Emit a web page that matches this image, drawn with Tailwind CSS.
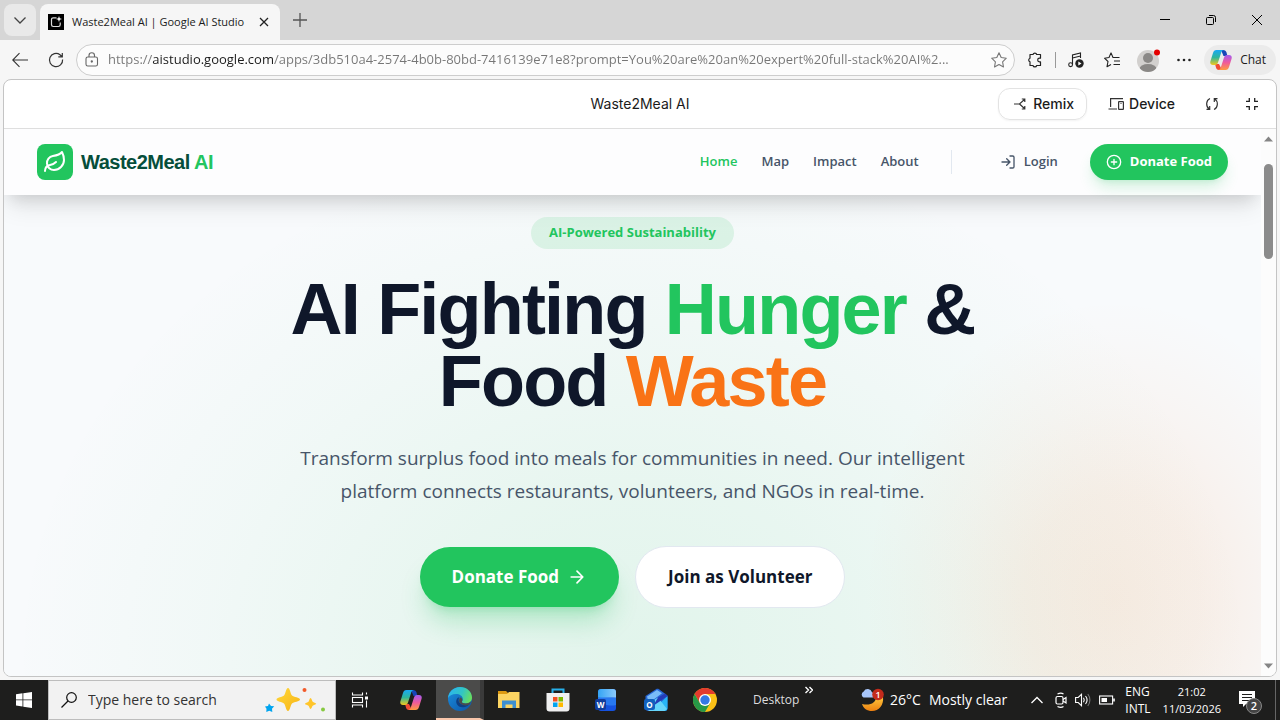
<!doctype html>
<html lang="en">

<head>
  <meta charset="UTF-8" />
  <meta name="viewport" content="width=device-width, initial-scale=1.0" />
  <title>Waste2Meal AI | Google AI Studio</title>
  <script src="https://cdn.jsdelivr.net/npm/@tailwindcss/browser@4"></script>
</head>

<body class="flex h-screen flex-col overflow-hidden bg-[#f6f6f6] font-['Open_Sans',sans-serif] text-[#1b1b1b]">

  <!-- Tab strip -->
  <header class="flex h-10 shrink-0 items-end bg-[#d6d6d6]">
    <button aria-label="Search tabs" class="mb-1 ml-1 flex size-8 items-center justify-center rounded-lg bg-[#e9e9e9]">
      <svg class="size-4" viewBox="0 0 16 16" fill="none" stroke="#444" stroke-width="1.3"><path d="M2.500 5.500 8 11l5.500-5.500" /></svg>
    </button>
    <div class="ml-1 flex h-9 w-60 items-center rounded-t-lg bg-[#f6f6f6] px-2">
      <svg class="size-4 shrink-0" viewBox="0 0 16 16" fill="none">
        <rect width="16" height="16" fill="#000" />
        <path d="M8.500 3.800H5.200A1.700 1.700 0 0 0 3.500 5.500v5.300a1.700 1.700 0 0 0 1.700 1.700h5.300a1.700 1.700 0 0 0 1.700-1.700V8.500" stroke="#ddd" stroke-width="1.200" />
        <path d="m11 2 .8 2.200L14 5l-2.200.8L11 8l-.8-2.200L8 5l2.200-.8z" fill="#fff" />
      </svg>
      <span class="ml-2 flex-1 text-[11px] whitespace-nowrap">Waste2Meal AI | Google AI Studio</span>
      <button aria-label="Close tab" class="flex size-4 items-center justify-center">
        <svg class="size-3" viewBox="0 0 12 12" stroke="#222" stroke-width="1.300"><path d="m2 2 8 8M10 2l-8 8" /></svg>
      </button>
    </div>
    <button aria-label="New tab" class="mb-3 ml-3 size-4">
      <svg class="size-4" viewBox="0 0 16 16" stroke="#555" stroke-width="1.300"><path d="M8 1v14M1 8h14" /></svg>
    </button>
    <div class="ml-auto flex h-10">
      <button aria-label="Minimize" class="flex w-[46px] items-center justify-center">
        <svg class="size-3" viewBox="0 0 12 12" stroke="#000"><path d="M1 5.500h10" /></svg>
      </button>
      <button aria-label="Restore" class="flex w-[46px] items-center justify-center">
        <svg class="size-3" viewBox="0 0 12 12" fill="none" stroke="#000"><rect x="1.500" y="3.500" width="7" height="7" rx="1" /><path d="M4 1.500h4.500a2 2 0 0 1 2 2V8" /></svg>
      </button>
      <button aria-label="Close" class="flex w-[46px] items-center justify-center">
        <svg class="size-3" viewBox="0 0 12 12" stroke="#000"><path d="m1 1 10 10M11 1 1 11" /></svg>
      </button>
    </div>
  </header>

  <!-- Address bar -->
  <div class="flex h-[39px] shrink-0 items-center pt-px pr-1 pl-3">
    <button aria-label="Back" class="size-4">
      <svg class="size-4" viewBox="0 0 16 16" fill="none" stroke="#333" stroke-width="1.100"><path d="M16 8H.8M7.500 1.200.7 8l6.800 6.800" /></svg>
    </button>
    <button aria-label="Refresh" class="ml-5 size-4">
      <svg class="size-4" viewBox="0 0 16 16" fill="none" stroke="#333" stroke-width="1.200"><path d="M14.600 7.500A6.600 6.600 0 1 1 12 2.800l2 1.900M14.300 1v3.900h-4" /></svg>
    </button>
    <div class="ml-3 flex h-8 min-w-0 flex-1 items-center rounded-full border border-[#cdcdcd] bg-[#fcfcfc] px-[7px]">
      <svg class="size-4 shrink-0" viewBox="0 0 16 16" fill="none" stroke="#666" stroke-width="1.100"><rect x="2" y="5" width="11.500" height="9" rx="1.800" /><path d="M5 5V3.500a2.750 2.750 0 0 1 5.500 0V5" /><circle cx="7.800" cy="9.500" r=".6" fill="#666" /></svg>
      <input type="text" aria-label="Address"
        value="https://aistudio.google.com/apps/3db510a4-2574-4b0b-80bd-7416139e71e8?prompt=You%20are%20an%20expert%20full-stack%20AI%2..."
        class="mx-2 min-w-0 flex-1 overflow-hidden bg-linear-[90deg,#767676_45px,#1b1b1b_45px,#1b1b1b_166px,#767676_166px] bg-clip-text text-[13px] text-ellipsis text-transparent outline-none" />
      <svg class="size-4 shrink-0" viewBox="0 0 16 16" fill="none" stroke="#777" stroke-width="1.100" stroke-linejoin="round"><path d="m8 .8 2.200 4.700 5.100.7-3.700 3.600.9 5.200L8 12.600 3.500 15l.9-5.200L.7 6.200l5.100-.7z" /></svg>
    </div>
    <div class="ml-3 flex items-center">
      <button aria-label="Extensions" class="size-4">
        <svg class="size-4" viewBox="0 0 16 16" fill="none" stroke="#222" stroke-width="1.200" stroke-linejoin="round"><path d="M3 2.500h3a1.900 1.900 0 0 1 3.700 0h3.800v3.700h-1a1.800 1.800 0 0 0 0 3.600h1v3.700H9.700a1.900 1.900 0 0 1-3.700 0H3V9.800a1.900 1.900 0 0 1 0-3.600z" /></svg>
      </button>
      <span class="mx-3 h-4 w-px bg-[#999]"></span>
      <button aria-label="Media" class="size-4">
        <svg class="size-4" viewBox="0 0 16 16" fill="none" stroke="#222" stroke-width="1.100"><path d="M4.500 12.500V3l8-2v5M4.500 6l8-2" /><circle cx="2.600" cy="12.700" r="1.900" /><circle cx="11.500" cy="11.500" r="4.200" fill="#222" stroke="none" /><path d="m10.300 9.500 3.200 2-3.200 2z" fill="#fff" stroke="none" /></svg>
      </button>
      <button aria-label="Favorites" class="ml-5 size-4">
        <svg class="size-4" viewBox="0 0 16 16" fill="none" stroke="#222" stroke-width="1.100" stroke-linejoin="round"><path d="M15.500 5.500H9L7 .9 5 5.500l-4.500.7L4 9.500 3 14.700l4-2.200M10 9h6M9.500 12.500H16" /></svg>
      </button>
      <button aria-label="Profile" class="ml-4 size-6">
        <svg class="size-6" viewBox="0 0 24 24"><defs><clipPath id="avatar"><circle cx="12" cy="13" r="11" /></clipPath></defs><circle cx="12" cy="13" r="11" fill="#d2d0ce" /><g fill="#8a8886" clip-path="url(#avatar)"><circle cx="12" cy="10" r="5" /><ellipse cx="12" cy="21" rx="8.500" ry="5" /></g><circle cx="21" cy="4.500" r="3" fill="#e50000" /></svg>
      </button>
      <button aria-label="Settings and more" class="ml-4 size-4">
        <svg class="size-4" viewBox="0 0 16 16" fill="#222"><circle cx="2.500" cy="8" r="1.300" /><circle cx="8" cy="8" r="1.300" /><circle cx="13.500" cy="8" r="1.300" /></svg>
      </button>
      <button class="ml-3 flex h-[30px] items-center gap-2 rounded-full bg-[#ebebeb] pr-2.5 pl-1.5 text-xs">
        <svg class="size-[22px]" viewBox="0 0 22 22">
          <defs>
            <linearGradient id="cpA" x1="0" y1="0" x2="0" y2="1"><stop stop-color="#18a8f5" /><stop offset=".5" stop-color="#2fb69a" /><stop offset="1" stop-color="#f3c81c" /></linearGradient>
            <linearGradient id="cpB" x1="0" y1="0" x2="0" y2="1"><stop stop-color="#a45cf0" /><stop offset=".5" stop-color="#ef5a9c" /><stop offset="1" stop-color="#ff9b3f" /></linearGradient>
          </defs>
          <path d="M13 1c2 0 3 1 3.500 2.500L17.500 7h-4L11 1z" fill="#1746b8" />
          <path d="M9 21c-2 0-2.500-1-3-2.500L5 15h4l3 6z" fill="#f04b35" />
          <path d="M6.500 1H14c-1.500 0-2.300 1-2.800 2.500L8 13.500C7.500 15 6.500 16 5 16H3C.5 16-.2 14.300.5 12L3 4c.6-2 1.500-3 3.500-3z" fill="url(#cpA)" />
          <path d="M15.500 21H8c1.500 0 2.300-1 2.800-2.500L14 8.500C14.500 7 15.500 6 17 6h2c2.500 0 3.200 1.700 2.500 4L19 18c-.6 2-1.500 3-3.500 3z" fill="url(#cpB)" />
        </svg>
        Chat
      </button>
    </div>
  </div>

  <!-- Page frame -->
  <div class="mx-[3px] mb-[3px] flex min-h-0 flex-1 flex-col overflow-hidden rounded-lg border border-[#c4c4c4] bg-white">
    <div class="grid h-[49px] shrink-0 grid-cols-[1fr_auto_1fr] items-center border-b border-[#dfdfdf] font-['Inter',sans-serif] text-sm">
      <span></span>
      <span>Waste2Meal AI</span>
      <div class="flex items-center justify-end pr-[15px] font-medium">
        <button class="flex h-8 items-center gap-1 rounded-xl border border-[#e3e3e3] px-3 shadow-xs">
          <svg class="size-[18px]" viewBox="0 0 18 18" fill="none" stroke="#333" stroke-width="1.200"><path d="M3 9h5.500l5-4.500M8.500 9l5 4.500M10.800 4h3v3M10.800 14h3v-3" /></svg>
          Remix
        </button>
        <button class="ml-5 flex items-center gap-1">
          <svg class="size-[18px]" viewBox="0 0 18 18" fill="none" stroke="#333" stroke-width="1.200"><path d="M16 3.600H3.600v8.500M1.500 14H10" /><rect x="11.600" y="6.600" width="4.800" height="7.800" rx=".5" /><path d="M13.500 8.500h1" /></svg>
          Device
        </button>
        <button aria-label="Reload preview" class="ml-7 size-[18px]">
          <svg class="size-[18px]" viewBox="0 0 18 18" fill="none" stroke="#333" stroke-width="1.200"><path d="M7 3.500C2.800 5.300 2.600 11.600 6.200 14M3.500 14.300h3.200V11M11 14.500c4.200-1.800 4.400-8.100.8-10.500M14.500 3.700h-3.200V7" /></svg>
        </button>
        <button aria-label="Exit full screen" class="ml-[22px] size-[18px]">
          <svg class="size-[18px]" viewBox="0 0 18 18" fill="none" stroke="#222" stroke-width="1.300"><path d="M6.300 3v3.300H3M11.700 3v3.300H15M6.300 15v-3.300H3M11.700 15v-3.300H15" /></svg>
        </button>
      </div>
    </div>

    <div class="flex min-h-0 flex-1">
      <div class="flex min-w-0 flex-1 flex-col bg-[#f8fafc] bg-[radial-gradient(ellipse_250px_300px_at_1110px_470px,rgba(249,115,22,0.11),rgba(249,115,22,0.085)_35%,rgba(249,115,22,0.04)_65%,rgba(249,115,22,0.01)_88%,rgba(249,115,22,0)),radial-gradient(ellipse_620px_520px_at_50%_530px,rgba(34,197,94,0.105),rgba(34,197,94,0.075)_35%,rgba(34,197,94,0.03)_70%,rgba(34,197,94,0))]">
        <nav class="flex h-[66px] shrink-0 items-center bg-[#fdfdfe] px-[33px] shadow-[0_16px_24px_-5px_rgba(0,0,0,0.1),0_8px_16px_-6px_rgba(0,0,0,0.12)]">
          <a href="#" class="flex items-center gap-2 font-['Liberation_Sans',sans-serif] text-xl font-bold tracking-tight text-[#064e3b]">
            <span class="flex size-9 items-center justify-center rounded-lg bg-[#22c55e]">
              <svg class="size-6" viewBox="0 0 24 24" fill="none" stroke="#fff" stroke-width="2" stroke-linecap="round" stroke-linejoin="round"><path d="M11 20A7 7 0 0 1 9.800 6.100C15.500 5 17 4.480 19 2c1 2 2 4.180 2 8 0 5.500-4.780 10-10 10Z" /><path d="M2 21c0-3 1.850-5.360 5.080-6C9.500 14.520 12 13 13 12" /></svg>
            </span>
            <span>Waste2Meal <span class="text-[#22c55e]">AI</span></span>
          </a>
          <div class="ml-auto flex items-center gap-6 text-[13px] font-semibold text-[#475569]">
            <a href="#" class="text-[#22c55e]">Home</a>
            <a href="#">Map</a>
            <a href="#">Impact</a>
            <a href="#">About</a>
          </div>
          <span class="mx-8 h-6 w-px bg-slate-200"></span>
          <button class="ml-4 flex items-center gap-2 text-[13px] font-semibold text-[#475569]">
            <svg class="size-4" viewBox="0 0 24 24" fill="none" stroke="currentColor" stroke-width="2" stroke-linecap="round" stroke-linejoin="round"><path d="M15 3h4a2 2 0 0 1 2 2v14a2 2 0 0 1-2 2h-4M10 17l5-5-5-5M15 12H3" /></svg>
            Login
          </button>
          <button class="ml-8 flex h-9 items-center gap-2 rounded-full bg-[#22c55e] px-4 text-[13px] font-bold text-white shadow-lg shadow-[#22c55e]/20">
            <svg class="size-4" viewBox="0 0 24 24" fill="none" stroke="currentColor" stroke-width="2" stroke-linecap="round" stroke-linejoin="round"><circle cx="12" cy="12" r="10" /><path d="M8 12h8M12 8v8" /></svg>
            Donate Food
          </button>
        </nav>

        <main class="flex flex-col items-center pt-[22px] text-center">
          <span class="flex h-8 items-center rounded-full bg-[#22c55e]/12 px-[18px] text-[13px] font-bold text-[#22c55e]">AI-Powered Sustainability</span>
          <h1 class="mt-6 font-['Liberation_Sans',sans-serif] text-7xl leading-none font-bold tracking-tight text-[#0f172a]">
            AI Fighting <span class="text-[#22c55e]">Hunger</span> &amp;<br />
            Food <span class="text-[#f97316]">Waste</span>
          </h1>
          <p class="mt-[25px] text-[19px] leading-[33px] text-[#475569]">
            Transform surplus food into meals for communities in need. Our intelligent<br />
            platform connects restaurants, volunteers, and NGOs in real-time.
          </p>
          <div class="mt-[38px] flex items-center gap-4">
            <button class="flex h-[60px] items-center gap-2 rounded-full bg-[#22c55e] px-8 text-[17px] font-bold text-white shadow-xl shadow-[#22c55e]/25">
              Donate Food
              <svg class="size-5" viewBox="0 0 24 24" fill="none" stroke="currentColor" stroke-width="2" stroke-linecap="round" stroke-linejoin="round"><path d="M5 12h14M12 5l7 7-7 7" /></svg>
            </button>
            <button class="flex h-[62px] items-center rounded-full border border-slate-200 bg-white px-8 text-[17px] font-bold text-[#0f172a]">Join as Volunteer</button>
          </div>
        </main>
      </div>

      <!-- Scrollbar -->
      <div class="flex w-[15px] shrink-0 flex-col items-center justify-between bg-[#fcfcfc] py-1.5">
        <svg class="h-2 w-[9px]" viewBox="0 0 9 8" fill="#858585"><path d="M0 6.500 4.500 1.500 9 6.500z" /></svg>
        <div class="mt-[21px] mb-auto h-[95px] w-[9px] rounded-full bg-[#8b8b8b]"></div>
        <svg class="h-2 w-[9px]" viewBox="0 0 9 8" fill="#858585"><path d="M0 1.500 4.500 6.500 9 1.500z" /></svg>
      </div>
    </div>
  </div>

  <!-- Taskbar -->
  <footer class="flex h-10 shrink-0 items-stretch bg-[#1e1e1d] text-white">
    <button aria-label="Start" class="flex w-12 items-center justify-center">
      <svg class="size-4" viewBox="0 0 16 16" fill="#fff"><path d="M0 2.200 6.500 1.300v6.200H0zM7.300 1.200 16 0v7.500H7.300zM0 8.300h6.500v6.200L0 13.600zM7.300 8.300H16V16l-8.700-1.200z" /></svg>
    </button>
    <label class="flex w-72 items-center border border-[#bdbdbd] bg-[#f2f2f2] pr-2 pl-3">
      <svg class="size-4 shrink-0" viewBox="0 0 16 16" fill="none" stroke="#111" stroke-width="1.200"><circle cx="10.500" cy="5.500" r="4.800" /><path d="M7 9 .5 15.500" /></svg>
      <input type="text" aria-label="Type here to search" placeholder="Type here to search" class="ml-[11px] w-40 min-w-0 text-sm outline-none placeholder:text-[#333]" />
      <svg class="ml-auto h-7 w-16 shrink-0" viewBox="0 0 64 28">
        <defs><linearGradient id="spark" x1="0" y1="0" x2="1" y2="1"><stop stop-color="#ffd83b" /><stop offset="1" stop-color="#f7b416" /></linearGradient></defs>
        <path d="M25 2c2 0 2.500 6 4 7.500S37 11.500 37 13.500s-6.500 2.500-8 4S27 25 25 25s-2.500-6-4-7.500-7.500-2-7.500-4 6-2.500 7.500-4S23 2 25 2z" fill="url(#spark)" />
        <path d="M47.500 12c1 0 1.500 3 2.200 3.800s3.500 1 3.500 2-2.800 1.200-3.500 2-1.200 3.200-2.200 3.200-1.200-2.500-2-3.200-3.500-1-3.500-2 2.700-1.200 3.500-2S46.500 12 47.500 12z" fill="#ffc52b" />
        <path d="m6 17.500 2 2.500 3.200.2L9 22.700l.3 3.300-3-1.300-3 1.300.2-3.200L2 20.500l3-.4z" fill="#00a4ef" />
        <circle cx="41.500" cy="4" r="2" fill="#f25a2a" /><circle cx="60" cy="23.500" r="2" fill="#86c940" />
      </svg>
    </label>
    <button aria-label="Task view" class="flex w-12 items-center justify-center">
      <svg class="h-4 w-[18px]" viewBox="0 0 18 16" fill="none" stroke="#fff" stroke-width="1.100"><path d="M1.500 .5v2.500h10V.5M1.500 15.500v-2.500h10v2.500M15.500 .5v2M15.500 8.500v7" /><rect x="1.500" y="5.500" width="10" height="5" /><path d="M14 4.500h3v3h-3z" fill="#fff" stroke="none" /></svg>
    </button>
    <div class="ml-[3px] flex items-stretch gap-px">
      <button aria-label="Copilot" class="flex w-12 items-center justify-center">
        <svg class="size-[22px]" viewBox="0 0 22 22">
          <path d="M13 1c2 0 3 1 3.500 2.500L17.500 7h-4L11 1z" fill="#1746b8" />
          <path d="M9 21c-2 0-2.500-1-3-2.500L5 15h4l3 6z" fill="#f04b35" />
          <path d="M6.500 1H14c-1.500 0-2.300 1-2.800 2.500L8 13.500C7.500 15 6.500 16 5 16H3C.5 16-.2 14.300.5 12L3 4c.6-2 1.500-3 3.500-3z" fill="url(#cpA)" />
          <path d="M15.500 21H8c1.500 0 2.300-1 2.800-2.500L14 8.500C14.500 7 15.500 6 17 6h2c2.500 0 3.200 1.700 2.500 4L19 18c-.6 2-1.500 3-3.500 3z" fill="url(#cpB)" />
        </svg>
      </button>
      <button aria-label="Microsoft Edge" class="flex w-12 items-center justify-center border-r-4 border-b-2 border-r-[#3a3a3a] border-b-[#fac7ab] bg-[#4b4b4a] pl-1">
        <svg class="size-6 shrink-0" viewBox="0 0 24 24">
          <defs>
            <linearGradient id="edgeTop" x1="0" y1=".3" x2="1" y2=".6"><stop stop-color="#2bb5ef" /><stop offset=".55" stop-color="#32c5c4" /><stop offset="1" stop-color="#6be05b" /></linearGradient>
            <linearGradient id="edgeLow" x1="0" y1="0" x2="1" y2="1"><stop stop-color="#1b8fdf" /><stop offset="1" stop-color="#0c54a6" /></linearGradient>
          </defs>
          <circle cx="12" cy="12" r="12" fill="url(#edgeLow)" />
          <path d="M0 11C.5 5 5.500 0 12 0c7 0 12 5 12 10.500 0 4-3 6-6.500 6-2.500 0-4-.9-3.600-1.900.4-.8.900-1.200.9-2.600C14.800 9 11.500 7 8 7 4 7 1 9 0 11z" fill="url(#edgeTop)" />
          <path d="M9.500 11C6 15 10 22 17 20c1.500-.4 3.500-1.500 4.500-2.700-4 2-9 .3-10.500-2.300-.7-1.300-.5-3 .3-4.700z" fill="#103f82" />
          <path d="M14 14.500c-.6 1 1 2 3.500 2 2.400 0 4.800-1 5.800-2.500l-1.700 3.500c-4 1.800-8.500.5-10-2-.8-1.300-.6-3.500.5-5 2 .5 2.900 2.300 1.900 4z" fill="#4b4b4a" />
        </svg>
      </button>
      <button aria-label="File Explorer" class="flex w-12 items-center justify-center">
        <svg class="h-5 w-[22px]" viewBox="0 0 22 20"><path d="M0 1h8l2 2h11v5H0z" fill="#dd9a12" /><path d="M0 4h9l2-2h10.500v16H0z" fill="#fcd462" /><path d="M4 10.500h14V18h-3.500v-3.500h-7V18H4z" fill="#3d8fd1" /></svg>
      </button>
      <button aria-label="Microsoft Store" class="flex w-12 items-center justify-center">
        <svg class="size-6" viewBox="0 0 24 24"><path d="M6.500 6V1.500h11V6" fill="none" stroke="#27b0ea" stroke-width="2" /><path d="M.5 5h23v15.500a3 3 0 0 1-3 3h-17a3 3 0 0 1-3-3z" fill="#f0f0f0" /><path d="M7 9h4.500v4.500H7z" fill="#f25022" /><path d="M12.500 9H17v4.500h-4.500z" fill="#7fba00" /><path d="M7 14.500h4.500V19H7z" fill="#00a4ef" /><path d="M12.500 14.500H17V19h-4.500z" fill="#ffb900" /></svg>
      </button>
      <button aria-label="Word" class="flex w-12 items-center justify-center">
        <svg class="size-6" viewBox="0 0 24 24">
          <defs><linearGradient id="word"><stop stop-color="#34a4f4" /><stop offset="1" stop-color="#8bcafb" /></linearGradient></defs>
          <rect x="3" y="1" width="18" height="22" rx="3" fill="#1552e0" /><path d="M3 10c5-3 13 2 18-1v8c-6 2-12-2-18 1z" fill="#2878f0" /><path d="M6 1h12a3 3 0 0 1 3 3v5.500H3V4a3 3 0 0 1 3-3z" fill="url(#word)" />
          <rect x="0" y="11" width="11" height="11" rx="2" fill="#103c9c" /><text x="5.500" y="19.500" text-anchor="middle" font-family="Open Sans" font-size="8" font-weight="700" fill="#fff">W</text>
        </svg>
      </button>
      <button aria-label="Outlook" class="flex w-12 items-center justify-center">
        <svg class="size-6" viewBox="0 0 24 24">
          <path d="M1.500 8 12 1.200c1-.6 2-.6 3 0l8.500 6.300V20a3 3 0 0 1-3 3h-16a3 3 0 0 1-3-3z" fill="#2766d5" /><path d="M3 8.500 13 2l5 3.300L5 15z" fill="#7abcf7" /><path d="M23.500 8v12a3 3 0 0 1-3 3H8z" fill="#27b5f7" /><path d="m5 15 9-5.500 9 11.500-2.500 2h-16z" fill="#66d5fb" /><path d="M14 9.500 21 5.500l2.500 2.500L9 18z" fill="#253cb7" />
          <rect x="0" y="11" width="11" height="11" rx="2" fill="#1160bd" /><text x="5.500" y="19.500" text-anchor="middle" font-family="Open Sans" font-size="8" font-weight="700" fill="#fff">O</text>
        </svg>
      </button>
      <button aria-label="Google Chrome" class="flex w-12 items-center justify-center">
        <svg class="size-6" viewBox="0 0 24 24"><circle cx="12" cy="12" r="12" fill="#fbc116" /><path d="M1.600 6A12 12 0 0 1 22.400 6H12l-5.200 9z" fill="#e33b2e" /><path d="M1.600 6A12 12 0 0 0 12 24l5.200-9-5.200 3-5.200-3z" fill="#279847" /><circle cx="12" cy="12" r="6" fill="#fff" /><circle cx="12" cy="12" r="4.700" fill="#3478e5" /></svg>
      </button>
    </div>
    <div class="ml-6 flex w-[60px] justify-between">
      <span class="self-center text-xs text-[#ddd]">Desktop</span>
      <button aria-label="Show more" class="mt-1.5 h-2">
        <svg class="size-2" viewBox="0 0 8 8" fill="none" stroke="#fff" stroke-width="1.400"><path d="m.5 1 3 3-3 3M4.500 1l3 3-3 3" /></svg>
      </button>
    </div>
    <div class="ml-auto flex items-stretch">
      <button class="flex items-center text-sm">
        <svg class="mr-1.5 size-6" viewBox="0 0 24 24"><defs><linearGradient id="moon" x1="0" y1="0" x2="0" y2="1"><stop stop-color="#ffc83d" /><stop offset="1" stop-color="#ed8010" /></linearGradient></defs><path d="M23 9c1 8-4 14-11 14-5 0-8.500-2.500-10-7 8 2 14-1 14-7z" fill="url(#moon)" /><path d="M3.500 9.500a3.300 3.300 0 0 1 .2-6 4.500 4.500 0 0 1 8.300.8 2.800 2.800 0 0 1 1 5.200z" fill="#a8c6fa" /><circle cx="18" cy="6.500" r="5.800" fill="#c42b1c" /><text x="18" y="9.800" text-anchor="middle" font-family="Open Sans" font-size="9" font-weight="600" fill="#fff">1</text></svg>
        26°C<span class="ml-2">Mostly clear</span>
      </button>
      <div class="ml-6 flex items-center">
        <button aria-label="Show hidden icons"><svg class="h-3 w-3" viewBox="0 0 12 12" fill="none" stroke="#fff" stroke-width="1.300"><path d="m.5 9 5.500-5.500L11.500 9" /></svg></button>
        <svg class="ml-3 h-4 w-3" viewBox="0 0 12 16" fill="none" stroke="#fff" stroke-width="1.200"><rect x="1" y="4.500" width="7" height="7.500" rx="1.500" /><path d="m8 7.500 3-2v5.500l-3-2M2.500 2c2-1 4.500-1 6 0M2.500 14.500c2 1 4.500 1 6 0" /></svg>
        <svg class="ml-2 size-4" viewBox="0 0 16 16" fill="none" stroke="#fff" stroke-width="1.100"><path d="M.6 5.500h2.600L6.500 2.300v11.400L3.200 10.500H.6zM8.500 5.800c1 1.500 1 3 0 4.500M10.500 4c2 2.500 2 5.500 0 8" /><path d="M12.800 2c2.800 3.500 2.800 8.500 0 12" stroke="#777" /></svg>
        <svg class="ml-2 size-4" viewBox="0 0 16 16" fill="none" stroke="#fff" stroke-width="1.100"><rect x=".6" y="4" width="13" height="8" /><path d="M15 6.500v3" stroke-width="1.600" /><path d="M2.500 6h5.500v4H2.500z" fill="#fff" stroke="none" /></svg>
      </div>
      <span class="ml-2.5 self-center text-xs leading-[17px]">ENG<br />INTL</span>
      <span class="ml-3 self-center text-center text-[11px] leading-[17px]">21:02<br />11/03/2026</span>
      <button aria-label="Notifications" class="mr-3 ml-4 self-center">
        <svg class="h-7 w-[26px]" viewBox="0 0 26 28"><path d="M2 5h16v13h-9l-3 3v-3H2z" fill="#fff" /><path d="M5 8.500h10M5 11.500h10M5 14.500h10" stroke="#1e1e1d" /><circle cx="17" cy="20" r="7.500" fill="#444" stroke="#888" /><text x="17" y="24" text-anchor="middle" font-family="Open Sans" font-size="11" font-weight="600" fill="#fff">2</text></svg>
      </button>
      <span class="w-[5px] border-l border-[#666]"></span>
    </div>
  </footer>
</body>

</html>
